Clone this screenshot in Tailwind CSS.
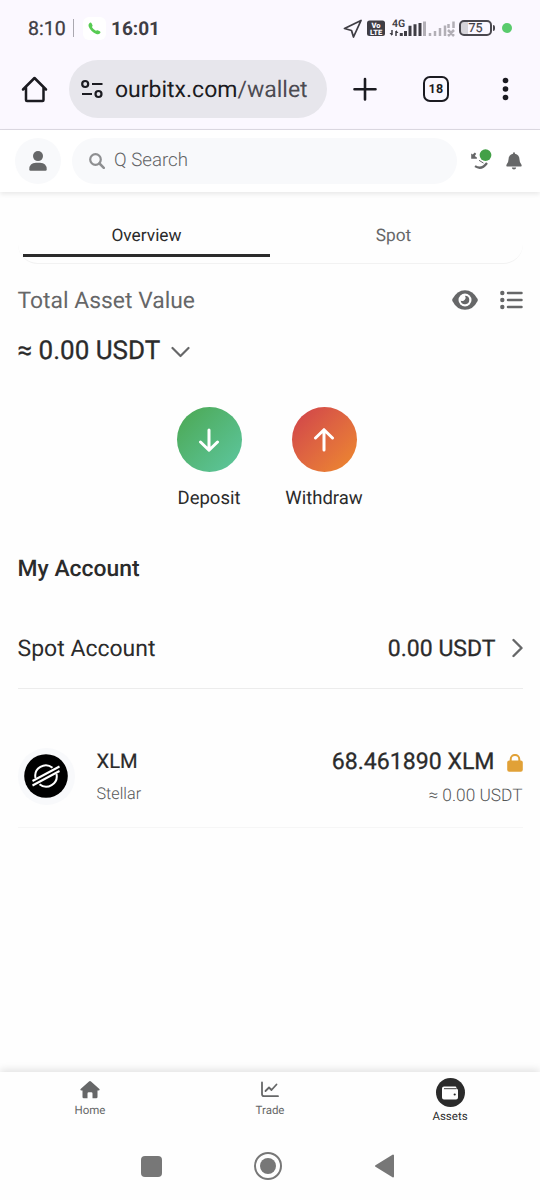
<!DOCTYPE html>
<html lang="en">
<head>
<meta charset="utf-8">
<title>Wallet</title>
<script src="https://cdn.jsdelivr.net/npm/@tailwindcss/browser@4"></script>
</head>
<body class="bg-white">
<div class="flex h-[1200px] w-[540px] flex-col overflow-hidden bg-[#fefefe] font-[Roboto,sans-serif] whitespace-nowrap text-[#2b2b2b] [text-rendering:geometricPrecision]">

  <!-- Status bar -->
  <div class="flex h-14 shrink-0 items-center bg-[#fbf8ff] pl-7 text-[#3f3d44]">
    <span class="mt-[2px] w-[39px] text-[19.5px] leading-6 [-webkit-text-stroke:.3px]">8:10</span>
    <span class="ml-[6px] h-[18px] w-px bg-[#aaa8b0]"></span>
    <span class="ml-[9px] flex size-[23px] items-center justify-center rounded-md bg-white">
      <svg class="size-[13px]" viewBox="0 0 13 13"><path d="M1.2 1.4Q2.6-.2 3.7 1.4L4.6 3.5Q4.8 4.3 3.9 5 5.3 7.6 7.9 8.8 8.8 7.9 9.6 8.2L11.8 9.2Q13 10 12 11.2 10.8 12.8 8.3 12 3 10 .8 4.8.1 2.6 1.2 1.4Z" fill="#57cb52"/></svg>
    </span>
    <span class="mt-[2px] ml-[5px] w-[54px] text-[19px] font-bold leading-6">16:01</span>
    <svg class="ml-[178px] h-6 w-[136px]" viewBox="0 0 136 24">
      <path d="M1.5 12.5 18 4.5 10.5 21 8.5 14.5Z" fill="none" stroke="#3f3d44" stroke-width="1.8" stroke-linejoin="round"/>
      <rect x="24" y="4.5" width="18" height="15.5" rx="2.5" fill="#3f3d44"/>
      <text x="33" y="11.8" text-anchor="middle" font-size="7.500" font-weight="900" fill="#fbf8ff">Vo</text>
      <text x="33" y="18.600" text-anchor="middle" font-size="7.500" font-weight="900" fill="#fbf8ff">LTE</text>
      <text x="49" y="10.800" font-size="10.500" font-weight="600" fill="#3f3d44">4G</text>
      <path d="M49 14v5M53 15v5" stroke="#3f3d44" stroke-width="1.5"/><path d="M46.5 17H49V20ZM55.5 17H53V14Z" fill="#3f3d44"/>
      <path d="M58.300 20v-3M62.500 20v-5M67 20V9.800M72 20V8.300M77 20V7" stroke="#3f3d44" stroke-width="3"/>
      <path d="M81.500 20V5.500" stroke="#b2afb6" stroke-width="3"/>
      <path d="M87 20v-3M92 20v-5M97 20v-8M102 20V9.500M105.500 12V8M110.500 12V5.500M105 14l6 6M111 14l-6 6" fill="none" stroke="#b2afb6" stroke-width="2.500"/>
    </svg>
    <span class="-ml-[20px] flex h-4 w-[33px] items-center justify-center rounded-[5px] border-2 border-[#4a484f] bg-linear-to-r from-[#d6d4da] from-24% to-[#fbf8ff] to-24% pt-[2px] text-[12.5px] leading-3 [-webkit-text-stroke:.2px]">75</span>
    <span class="ml-px h-[6px] w-[2px] rounded-r bg-[#4a484f]"></span>
    <span class="ml-[7px] size-[10px] rounded-full bg-[#59cb6c]"></span>
  </div>

  <!-- Browser toolbar -->
  <div class="flex h-[74px] shrink-0 items-start border-b border-[#dddae3] bg-[#fbf8ff] text-[#1b1b21]">
    <svg class="mt-[18px] ml-[20px] h-[30px] w-[30px]" viewBox="0 0 30 30" fill="none" stroke="#1b1b21" stroke-width="2.500" stroke-linejoin="round" stroke-linecap="round"><path d="M3 15.500 14.500 4 26 15.500M6 13.500V26a1 1 0 0 0 1 1H22.500a1 1 0 0 0 1-1V13.500"/></svg>
    <div class="ml-[19px] mt-[4px] flex h-[58px] w-[258px] items-center rounded-full bg-[#e7e6ec] pl-3">
      <svg class="h-6 w-[24px]" viewBox="0 0 24 24" fill="none" stroke="#1b1b21" stroke-width="2.200"><circle cx="4.200" cy="7" r="3"/><path d="M11 7H21.500M1 17H11"/><circle cx="17.500" cy="17" r="3"/></svg>
      <span class="ml-[10px] mt-px text-[23px] leading-8">ourbitx.com<span class="text-[#4c4b52]">/wallet</span></span>
    </div>
    <svg class="mt-[21px] ml-[26px] size-6" viewBox="0 0 24 24" stroke="#1b1b21" stroke-width="2.600" stroke-linecap="round"><path d="M12 2V22.500M1.500 12.200H22.500"/></svg>
    <div class="mt-[20px] ml-[46px] flex size-[26px] items-center justify-center rounded-[7px] border-[2.500px] border-[#1b1b21] pt-[2px] text-[12.500px] font-bold leading-4 tracking-[.4px]">18</div>
    <svg class="mt-[20px] ml-[50px] h-[26px] w-3" viewBox="0 0 12 26" fill="#1b1b21"><circle cx="6.500" cy="4.500" r="2.800"/><circle cx="6.500" cy="13" r="2.800"/><circle cx="6.500" cy="21.500" r="2.800"/></svg>
  </div>

  <!-- App header -->
  <header class="flex h-[62px] shrink-0 items-center bg-white pl-[15px] shadow-[0_2px_5px_rgba(0,0,0,.09)]">
    <div class="flex size-[46px] items-center justify-center rounded-full bg-[#f8f9fb]">
      <svg class="h-5 w-[18px]" viewBox="0 0 18 20" fill="#666768"><circle cx="9" cy="5.100" r="5"/><path d="M.300 18.500Q.300 11.800 7 11.800h4q6.700 0 6.700 6.700 0 1.200-1.200 1.200h-15Q.300 19.700.300 18.500Z"/></svg>
    </div>
    <div class="ml-[11px] flex h-[46px] w-[385px] items-center rounded-full bg-[#f8f9fb] pl-[17px]">
      <svg class="size-4" viewBox="0 0 16 16" fill="none" stroke="#8e8f91"><circle cx="6.500" cy="6.500" r="5.300" stroke-width="2.200"/><path d="M10.500 10.500 14.800 14.800" stroke-width="2.500" stroke-linecap="round"/></svg>
      <span class="ml-[9px] -mt-[2px] text-[18.700px] font-light leading-6 text-[#626365]">Q Search</span>
    </div>
    <svg class="ml-[13px] h-6 w-6" viewBox="0 0 24 24"><path d="M1.200 4.500 2.700 5.600 4.800 3.500 6.200 4.800 4.800 7 6.900 8.600V9.800H1.200Z" fill="#666768"/><path d="M5 17.200Q11.500 21.500 17 14" fill="none" stroke="#666768" stroke-width="2.200"/><path d="M9 11.300l4.500 2.800" fill="none" stroke="#666768" stroke-width="1"/><circle cx="15.500" cy="6.100" r="5.900" fill="#43a047"/></svg>
    <svg class="ml-[12px] h-[18px] w-4" viewBox="0 0 16 18" fill="#666768"><path d="M8 .300Q9 .300 9 1.700 13.500 2.800 13.500 7.500 13.500 10.800 15.500 12.800 16 14.500 15 14.500H1Q0 14.500.500 12.800 2.500 10.800 2.500 7.500 2.500 2.800 7 1.700 7 .300 8 .300ZM5.800 15.500h4.400Q10 17.600 8 17.600T5.800 15.500Z"/></svg>
  </header>

  <main class="flex grow flex-col px-[17.500px]">
    <!-- Tabs -->
    <nav class="mt-[20px] flex h-[52px] shrink-0 rounded-b-[20px] border-b border-[#f2f2f2] px-[5px] text-[17.300px] leading-6">
      <div class="flex w-[247px] justify-center border-b-[3px] border-[#2b2b2b] pt-[12px] mb-[6px]"><span class="ml-px">Overview</span></div>
      <div class="flex w-[248px] justify-center pt-[12px] text-[#666768]"><span>Spot</span></div>
    </nav>

    <div class="mt-[20px] flex h-8 shrink-0 items-center text-[#666768]">
      <span class="mt-[2px] text-[22.900px]">Total Asset Value</span>
      <svg class="ml-auto h-5 w-[26px]" viewBox="0 0 26 20"><path d="M.400 9.100Q5 .200 13 .200T25.600 9.100Q26 10 25.600 10.900 21 19.800 13 19.800T.400 10.900Q0 10 .400 9.100Z" fill="#666768"/><circle cx="13" cy="10" r="6.500" fill="#fefefe"/><path d="M13 5.700A4.300 4.300 0 1 1 8.700 10.500 3.300 3.300 0 0 0 13 5.700Z" fill="#666768"/></svg>
      <svg class="ml-[22px] h-5 w-[23px]" viewBox="0 0 23 20" fill="#666768" stroke="#666768"><g stroke="none"><circle cx="2.300" cy="3" r="2.200"/><circle cx="2.300" cy="10" r="2.200"/><circle cx="2.300" cy="17" r="2.200"/></g><path d="M8 3H21.500M8 10H21.500M8 17H21.500" stroke-width="2.500" stroke-linecap="round"/></svg>
    </div>

    <div class="mt-[18px] flex h-8 shrink-0 items-center">
      <span class="mt-[2px] w-[142px] text-[26px] [-webkit-text-stroke:.3px]">≈ 0.00 USDT</span>
      <svg class="ml-[11px] mt-[3px] h-3 w-[19px]" viewBox="0 0 19 12" fill="none" stroke="#666768" stroke-width="2.200" stroke-linecap="round" stroke-linejoin="round"><path d="M1.500 2 9.500 10 17.500 2"/></svg>
    </div>

    <div class="mt-[41px] mr-[7px] flex shrink-0 justify-center text-[18.500px] leading-6">
      <div class="flex w-[115px] flex-col items-center">
        <div class="flex size-[65px] items-center justify-center rounded-full bg-linear-to-br from-[#4ca750] to-[#5ec7a0]"><svg class="size-6" viewBox="0 0 24 24" fill="none" stroke="#fff" stroke-width="3" stroke-linecap="round" stroke-linejoin="round"><path d="M12 2V22M3.500 14 12 22.300 20.500 14"/></svg></div>
        <span class="mt-[14px]">Deposit</span>
      </div>
      <div class="flex w-[115px] flex-col items-center">
        <div class="flex size-[65px] items-center justify-center rounded-full bg-linear-to-br from-[#cf3f4a] to-[#ee8a2a]"><svg class="size-6" viewBox="0 0 24 24" fill="none" stroke="#fff" stroke-width="3" stroke-linecap="round" stroke-linejoin="round"><path d="M12 22V2M3.500 10 12 1.700 20.500 10"/></svg></div>
        <span class="mt-[14px]">Withdraw</span>
      </div>
    </div>

    <div class="mt-[43px] flex h-8 shrink-0 items-center text-[22.900px] font-medium"><span>My Account</span></div>

    <div class="mt-[23px] flex h-[81px] shrink-0 items-center border-b border-[#ececec] text-[23px]">
      <span class="mt-[2px]">Spot Account</span>
      <span class="mt-[2px] ml-auto [-webkit-text-stroke:.3px]">0.00 USDT</span>
      <svg class="ml-[16px] h-5 w-[11px]" viewBox="0 0 11 20" fill="none" stroke="#666768" stroke-width="2.400" stroke-linecap="round" stroke-linejoin="round"><path d="M1.500 2 9.500 10 1.500 18"/></svg>
    </div>

    <div class="mt-[36px] flex h-[103px] shrink-0 items-center border-b border-[#f6f6f6]">
      <div class="flex size-[57px] items-center justify-center rounded-full bg-[#f8f9fb]">
        <svg class="size-11" viewBox="0 0 44 44"><circle cx="22" cy="22" r="21.800"/><g fill="none" stroke="#fff" stroke-width="2"><path d="M11.500 24A10.500 10.500 0 0 1 28.500 13.800M32.500 20A10.500 10.500 0 0 1 15.500 30.200"/><path d="M8.500 27 35.500 12.500M8.500 31.500 35.500 17"/></g></svg>
      </div>
      <div class="ml-[22px] flex flex-col">
        <span class="text-[20.200px] leading-7 [-webkit-text-stroke:.2px]">XLM</span>
        <span class="mt-[7px] text-[16.200px] font-light leading-6 text-[#555657]">Stellar</span>
      </div>
      <div class="ml-auto flex flex-col items-end">
        <div class="flex items-center"><span class="mt-px text-[23.100px] leading-8 [-webkit-text-stroke:.3px]">68.461890 XLM</span>
          <svg class="ml-[12px] mt-[3px] h-[18px] w-4" viewBox="0 0 16 18"><path d="M3.700 8V5.200a4.300 4.300 0 0 1 8.600 0V8" fill="none" stroke="#e1a137" stroke-width="2"/><rect x=".200" y="6.500" width="15.600" height="11.300" rx="2" fill="#e1a137"/></svg>
        </div>
        <span class="mt-[6px] -mb-px text-[17.300px] font-light leading-6 text-[#555657]">≈ 0.00 USDT</span>
      </div>
    </div>
  </main>

  <!-- App navigation -->
  <footer class="grid h-[60px] shrink-0 grid-cols-3 bg-[#fefefe] text-[11.500px] leading-4 text-[#666768] shadow-[0_-2px_8px_rgba(0,0,0,.12)]">
    <div class="flex flex-col items-center pt-[8px]">
      <svg class="h-[20px] w-5" viewBox="0 0 20 20" fill="#666768"><path d="M9 1.400Q10 .600 11 1.400L19.400 9Q20.200 10.300 18.500 10.600H17.500V17Q17.500 18.300 16.200 18.300H12.500V13.500Q12.500 12.300 11.300 12.300H8.700Q7.500 12.300 7.500 13.500V18.300H3.800Q2.500 18.300 2.500 17V10.600H1.500Q-.200 10.300.600 9Z"/></svg>
      <span class="mt-[2px]">Home</span>
    </div>
    <div class="flex flex-col items-center pt-[8px]">
      <svg class="h-[20px] w-5" viewBox="0 0 20 20" fill="none" stroke="#666768" stroke-width="1.800" stroke-linecap="round" stroke-linejoin="round"><path d="M2 2.500V14Q2 16.200 4 16.200H18M5.500 11 9 7.500 11.500 10 16.500 4.500"/></svg>
      <span class="mt-[2px]">Trade</span>
    </div>
    <div class="flex flex-col items-center pt-[6px] text-[#2b2b2b]">
      <div class="flex size-[29px] items-center justify-center rounded-full bg-[#2b2b2b]"><svg class="h-[14px] w-4" viewBox="0 0 16 14"><path d="M2 .500H13.500Q14.500.500 14.500 2.500 16 2.800 16 4.500V11.500Q16 13.500 14 13.500H2Q0 13.500 0 11.500V2.500Q0 .500 2 .500Z" fill="#fff"/><path d="M2 2.700H14.500" stroke="#2b2b2b" stroke-width=".900"/><circle cx="12.700" cy="8.500" r="1.100" fill="#2b2b2b"/></svg></div>
      <span class="mt-px">Assets</span>
    </div>
  </footer>

  <!-- System navigation -->
  <div class="flex h-[68px] shrink-0 items-center bg-[#fefefe] pl-[141px]">
    <div class="size-[21px] rounded-[4px] bg-[#777]"></div>
    <div class="ml-[92px] flex size-[28px] items-center justify-center rounded-full border-2 border-[#777]"><div class="size-4 rounded-full bg-[#777]"></div></div>
    <svg class="ml-[93px] h-6 w-5" viewBox="0 0 20 24"><path d="M1 12 18 1.500V22.500Z" fill="#777" stroke="#777" stroke-width="2" stroke-linejoin="round"/></svg>
  </div>
</div>
</body>
</html>
